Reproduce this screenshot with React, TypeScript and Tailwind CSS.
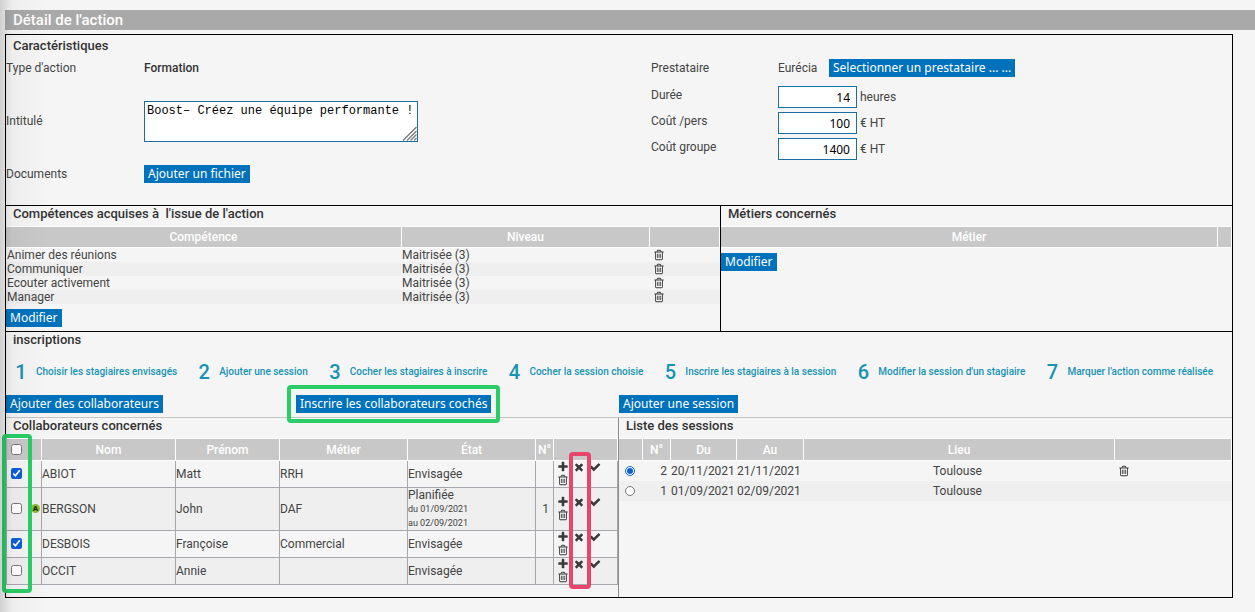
import React, { useState } from 'react';
import { clsx } from 'clsx';

type IconName = 'plus' | 'times' | 'check' | 'trash';

const iconPaths: Record<IconName, string> = {
  plus: 'M1600 736v192q0 40-28 68t-68 28h-416v416q0 40-28 68t-68 28H800q-40 0-68-28t-28-68v-416H288q-40 0-68-28t-28-68V736q0-40 28-68t68-28h416V224q0-40 28-68t68-28h192q40 0 68 28t28 68v416h416q40 0 68 28t28 68z',
  times: 'M1490 1322q0 40-28 68l-136 136q-28 28-68 28t-68-28l-294-294-294 294q-28 28-68 28t-68-28l-136-136q-28-28-28-68t28-68l294-294-294-294q-28-28-28-68t28-68l136-136q28-28 68-28t68 28l294 294 294-294q28-28 68-28t68 28l136 136q28 28 28 68t-28 68l-294 294 294 294q28 28 28 68z',
  check: 'M1671 566q0 40-28 68l-724 724-136 136q-28 28-68 28t-68-28l-136-136-362-362q-28-28-28-68t28-68l136-136q28-28 68-28t68 28l294 295 656-657q28-28 68-28t68 28l136 136q28 28 28 68z',
  trash: 'M704 736v576q0 14-9 23t-23 9h-64q-14 0-23-9t-9-23V736q0-14 9-23t23-9h64q14 0 23 9t9 23zm256 0v576q0 14-9 23t-23 9h-64q-14 0-23-9t-9-23V736q0-14 9-23t23-9h64q14 0 23 9t9 23zm256 0v576q0 14-9 23t-23 9h-64q-14 0-23-9t-9-23V736q0-14 9-23t23-9h64q14 0 23 9t9 23zm128 724V512H448v948q0 22 7 40.5t14.5 27 10.5 8.5h832q3 0 10.5-8.5t14.5-27 7-40.5zM672 384h448l-48-117q-7-9-17-11H738q-10 2-17 11zm928 32v64q0 14-9 23t-23 9h-96v948q0 83-47 143.5t-113 60.5H480q-66 0-113-58.5T320 1464V512h-96q-14 0-23-9t-9-23v-64q0-14 9-23t23-9h309l70-167q15-37 54-63t79-26h320q40 0 79 26t54 63l70 167h309q14 0 23 9t9 23z',
};

const IconButton: React.FC<{ icon: IconName; label: string }> = ({ icon, label }) => (
  <button type="button" aria-label={label} className="flex h-[13px] w-4 items-start justify-center text-[#3a3a3a]">
    <svg viewBox="0 0 1792 1792" className="h-3 w-3" fill="currentColor">
      <path d={iconPaths[icon]} />
    </svg>
  </button>
);

const Button: React.FC<{ children: React.ReactNode }> = ({ children }) => (
  <button
    type="button"
    className="h-[18px] whitespace-nowrap bg-[#0072bc] px-1 font-['Noto_Sans',sans-serif] text-xs leading-[18px] text-white"
  >
    {children}
  </button>
);

const SectionTitle: React.FC<{ children: React.ReactNode }> = ({ children }) => (
  <h2 className="h-5 whitespace-pre pl-[7px] text-[13px] font-medium leading-4 text-[#333]">{children}</h2>
);

const Th: React.FC<{ children?: React.ReactNode }> = ({ children }) => (
  <th className="border-y border-r border-white bg-[#c8c8c8] p-0 text-center font-medium text-white">{children}</th>
);

const competences = ['Animer des réunions', 'Communiquer', 'Ecouter activement', 'Manager'];

const steps = [
  'Choisir les stagiaires envisagés',
  'Ajouter une session',
  'Cocher les stagiaires à inscrire',
  'Cocher la session choisie',
  'Inscrire les stagiaires à la session',
  "Modifier la session d'un stagiaire",
  "Marquer l'action comme réalisée",
];

const amounts = [
  { id: 'duree', label: 'Durée', value: '14', unit: 'heures' },
  { id: 'cout-pers', label: 'Coût /pers', value: '100', unit: '€ HT' },
  { id: 'cout-groupe', label: 'Coût groupe', value: '1400', unit: '€ HT' },
];

const collaborateurs = [
  { nom: 'ABIOT', prenom: 'Matt', metier: 'RRH', etat: 'Envisagée', dates: [], numero: '', alert: false },
  {
    nom: 'BERGSON',
    prenom: 'John',
    metier: 'DAF',
    etat: 'Planifiée',
    dates: ['du 01/09/2021', 'au 02/09/2021'],
    numero: '1',
    alert: true,
  },
  { nom: 'DESBOIS', prenom: 'Françoise', metier: 'Commercial', etat: 'Envisagée', dates: [], numero: '', alert: false },
  { nom: 'OCCIT', prenom: 'Annie', metier: '', etat: 'Envisagée', dates: [], numero: '', alert: false },
];

const sessions = [
  { numero: '2', du: '20/11/2021', au: '21/11/2021', lieu: 'Toulouse', removable: true },
  { numero: '1', du: '01/09/2021', au: '02/09/2021', lieu: 'Toulouse', removable: false },
];

const Caracteristiques = () => (
  <section className="h-[171px] border-b border-black pt-[3px]">
    <SectionTitle>Caractéristiques</SectionTitle>
    <div className="grid grid-cols-[645fr_581fr]">
      <div>
        <div className="flex h-5 items-center">
          <span className="w-[138px]">Type d'action</span>
          <span className="font-medium text-[#333]">Formation</span>
        </div>
        <div className="flex h-[86px] items-center">
          <label htmlFor="intitule" className="w-[138px]">
            Intitulé
          </label>
          <div className="relative">
            <textarea
              id="intitule"
              defaultValue="Boost– Créez une équipe performante !"
              className="block h-[41px] w-[274px] resize-none border border-[#1a6ea0] bg-white p-[2px] font-['Liberation_Mono',monospace] text-xs leading-[14px] text-black"
            />
            <svg viewBox="0 0 15 15" className="absolute bottom-px right-px h-[15px] w-[15px]" stroke="#777" fill="none">
              <path d="M1 14.5L14.5 1M5 14.5L14.5 5M8.5 14.5L14.5 8.5M12 14.5L14.5 12" strokeWidth="1.3" />
            </svg>
          </div>
        </div>
        <div className="flex h-5 items-center">
          <span className="w-[138px]">Documents</span>
          <Button>Ajouter un fichier</Button>
        </div>
      </div>
      <div>
        <div className="flex h-5 items-center">
          <span className="w-[127px]">Prestataire</span>
          <span className="w-[51px]">Eurécia</span>
          <Button>Selectionner un prestataire ... ...</Button>
        </div>
        <div className="pt-1">
          {amounts.map((amount) => (
            <div key={amount.id} className="flex h-[26px] items-center">
              <label htmlFor={amount.id} className="w-[127px]">
                {amount.label}
              </label>
              <div className="flex items-center gap-[3px] pt-1">
                <input
                  id={amount.id}
                  type="text"
                  defaultValue={amount.value}
                  className="h-[22px] w-[79px] border border-[#1a6ea0] bg-white px-[6px] text-right font-['Noto_Sans',sans-serif] text-xs text-black"
                />
                <span>{amount.unit}</span>
              </div>
            </div>
          ))}
        </div>
      </div>
    </div>
  </section>
);

const Competences = () => (
  <section className="grid h-[126px] grid-cols-[714fr_512fr] border-b border-black">
    <div>
      <SectionTitle>Compétences acquises à{'  '}l'issue de l'action</SectionTitle>
      <table className="w-full table-fixed border-separate border-spacing-0">
        <colgroup>
          <col />
          <col className="w-[248px]" />
          <col className="w-[70px]" />
        </colgroup>
        <thead>
          <tr className="h-[22px]">
            <Th>Compétence</Th>
            <Th>Niveau</Th>
            <Th />
          </tr>
        </thead>
        <tbody>
          {competences.map((competence) => (
            <tr key={competence} className="h-[14px] even:bg-[#efefef]">
              <td className="p-0 pl-px leading-[14px]">{competence}</td>
              <td className="p-0 leading-[14px]">Maitrisée (3)</td>
              <td className="p-0 pl-px">
                <IconButton icon="trash" label={`Supprimer ${competence}`} />
              </td>
            </tr>
          ))}
        </tbody>
      </table>
      <div className="flex pt-[5px]">
        <Button>Modifier</Button>
      </div>
    </div>
    <div className="border-l border-black">
      <SectionTitle>Métiers concernés</SectionTitle>
      <table className="w-full table-fixed border-separate border-spacing-0">
        <colgroup>
          <col />
          <col className="w-[14px]" />
        </colgroup>
        <thead>
          <tr className="h-[22px]">
            <Th>Métier</Th>
            <Th />
          </tr>
        </thead>
      </table>
      <div className="flex pt-[5px]">
        <Button>Modifier</Button>
      </div>
    </div>
  </section>
);

const Collaborateurs = () => {
  const [checked, setChecked] = useState<string[]>(['ABIOT', 'DESBOIS']);

  const toggle = (nom: string) => {
    setChecked(checked.includes(nom) ? checked.filter((n) => n !== nom) : [...checked, nom]);
  };

  const toggleAll = () => {
    setChecked(checked.length === collaborateurs.length ? [] : collaborateurs.map((c) => c.nom));
  };

  const cell = 'border-b border-r border-[#a5a8ad] p-0';

  return (
    <div>
      <SectionTitle>Collaborateurs concernés</SectionTitle>
      <div className="relative">
        <table className="w-full table-fixed border-separate border-spacing-0 border-l border-[#a5a8ad]">
          <colgroup>
            <col className="w-[35px]" />
            <col />
            <col className="w-[104px]" />
            <col className="w-[128px]" />
            <col className="w-[128px]" />
            <col className="w-[18px]" />
            <col className="w-16" />
          </colgroup>
          <thead>
            <tr className="h-[23px]">
              <Th>
                <input
                  type="checkbox"
                  aria-label="Tout cocher"
                  checked={checked.length === collaborateurs.length}
                  onChange={toggleAll}
                  className="ml-1 block h-[11px] w-[11px] accent-[#0b5fd7]"
                />
              </Th>
              <Th>Nom</Th>
              <Th>Prénom</Th>
              <Th>Métier</Th>
              <Th>État</Th>
              <Th>N°</Th>
              <Th />
            </tr>
          </thead>
          <tbody>
            {collaborateurs.map((c) => (
              <tr key={c.nom} className="even:bg-[#efefef]">
                <td className={cell}>
                  <div className="flex items-center justify-between pb-px pl-1 pr-px">
                    <input
                      type="checkbox"
                      aria-label={c.nom}
                      checked={checked.includes(c.nom)}
                      onChange={() => toggle(c.nom)}
                      className="block h-[11px] w-[11px] accent-[#0b5fd7]"
                    />
                    {c.alert && (
                      <span className="flex h-[9px] w-[9px] items-center justify-center rounded-full bg-[#8ab833] text-[8px] font-black leading-none text-[#1d2b08]">
                        A
                      </span>
                    )}
                  </div>
                </td>
                <td className={cell}>{c.nom}</td>
                <td className={cell}>{c.prenom}</td>
                <td className={cell}>{c.metier}</td>
                <td className={clsx(cell, 'leading-[14px]')}>
                  {c.etat}
                  {c.dates.map((date) => (
                    <div key={date} className="text-[9px]">
                      {date}
                    </div>
                  ))}
                </td>
                <td className={clsx(cell, 'text-right')}>
                  <span className="pr-1">{c.numero}</span>
                </td>
                <td className={cell}>
                  <div className="ml-px flex w-12 flex-wrap">
                    <IconButton icon="plus" label="Ajouter" />
                    <IconButton icon="times" label="Refuser" />
                    <IconButton icon="check" label="Valider" />
                    <IconButton icon="trash" label="Supprimer" />
                  </div>
                </td>
              </tr>
            ))}
          </tbody>
        </table>
        <div className="pointer-events-none absolute -bottom-2 -left-1 -top-1 w-[30px] rounded-sm border-4 border-[#2acd66]" />
        <div className="pointer-events-none absolute -bottom-1 right-[27px] top-[14px] w-[22px] rounded-sm border-4 border-[#e9456b]" />
      </div>
    </div>
  );
};

const Sessions = () => {
  const [selected, setSelected] = useState('2');

  return (
    <div className="border-l border-[#8c8c8c]">
      <SectionTitle>Liste des sessions</SectionTitle>
      <table className="w-full table-fixed border-separate border-spacing-0">
        <colgroup>
          <col className="w-6" />
          <col className="w-7" />
          <col className="w-[66px]" />
          <col className="w-[67px]" />
          <col />
          <col className="w-[117px]" />
        </colgroup>
        <thead>
          <tr className="h-[23px]">
            <Th />
            <Th>N°</Th>
            <Th>Du</Th>
            <Th>Au</Th>
            <Th>Lieu</Th>
            <Th />
          </tr>
        </thead>
        <tbody>
          {sessions.map((session) => (
            <tr key={session.numero} className="h-5 even:bg-[#efefef]">
              <td className="p-0 pl-[6px]">
                <input
                  type="radio"
                  name="session"
                  aria-label={`Session ${session.numero}`}
                  checked={selected === session.numero}
                  onChange={() => setSelected(session.numero)}
                  className="block h-[10px] w-[10px] accent-[#0b5fd7]"
                />
              </td>
              <td className="p-0 pr-1 text-right">{session.numero}</td>
              <td className="p-0">{session.du}</td>
              <td className="p-0">{session.au}</td>
              <td className="p-0 pr-1 text-center">{session.lieu}</td>
              <td className="p-0 pl-px">{session.removable && <IconButton icon="trash" label="Supprimer la session" />}</td>
            </tr>
          ))}
        </tbody>
      </table>
    </div>
  );
};

const Inscriptions = () => (
  <section>
    <SectionTitle>inscriptions</SectionTitle>
    <ol className="flex h-10 items-center gap-[21px] whitespace-nowrap pl-[9px] text-[#1593b3]">
      {steps.map((step, index) => (
        <li key={step} className="flex items-center gap-[9px]">
          <span className="w-3 text-center text-xl font-medium">{index + 1}</span>
          <span className="text-[10px] font-medium">{step}</span>
        </li>
      ))}
    </ol>
    <div className="grid h-[26px] grid-cols-[613fr_613fr] border-b border-[#c4c4c4] pt-[3px]">
      <div className="grid grid-cols-[290px_1fr] items-start justify-items-start">
        <Button>Ajouter des collaborateurs</Button>
        <div className="relative flex">
          <Button>Inscrire les collaborateurs cochés</Button>
          <div className="pointer-events-none absolute -inset-x-[9px] -inset-y-[10px] rounded-sm border-4 border-[#2acd66]" />
        </div>
      </div>
      <div>
        <Button>Ajouter une session</Button>
      </div>
    </div>
    <div className="grid h-[179px] grid-cols-[612fr_614fr]">
      <Collaborateurs />
      <Sessions />
    </div>
  </section>
);

export default function App() {
  return (
    <div className="relative min-h-screen bg-[#f5f5f5] pb-[14px] pl-[5px] pt-[10px] font-[Roboto,sans-serif] text-xs text-[#444]">
      <h1 className="h-5 bg-[#a9a9a9] pl-2 text-[15px] font-medium leading-5 text-white">Détail de l'action</h1>
      <main className="mr-[22px] mt-1 border border-black">
        <Caracteristiques />
        <Competences />
        <Inscriptions />
      </main>
      <div className="pointer-events-none absolute inset-y-0 left-0 w-12 bg-linear-to-r from-black/15 via-black/3 via-25% to-transparent" />
    </div>
  );
}
